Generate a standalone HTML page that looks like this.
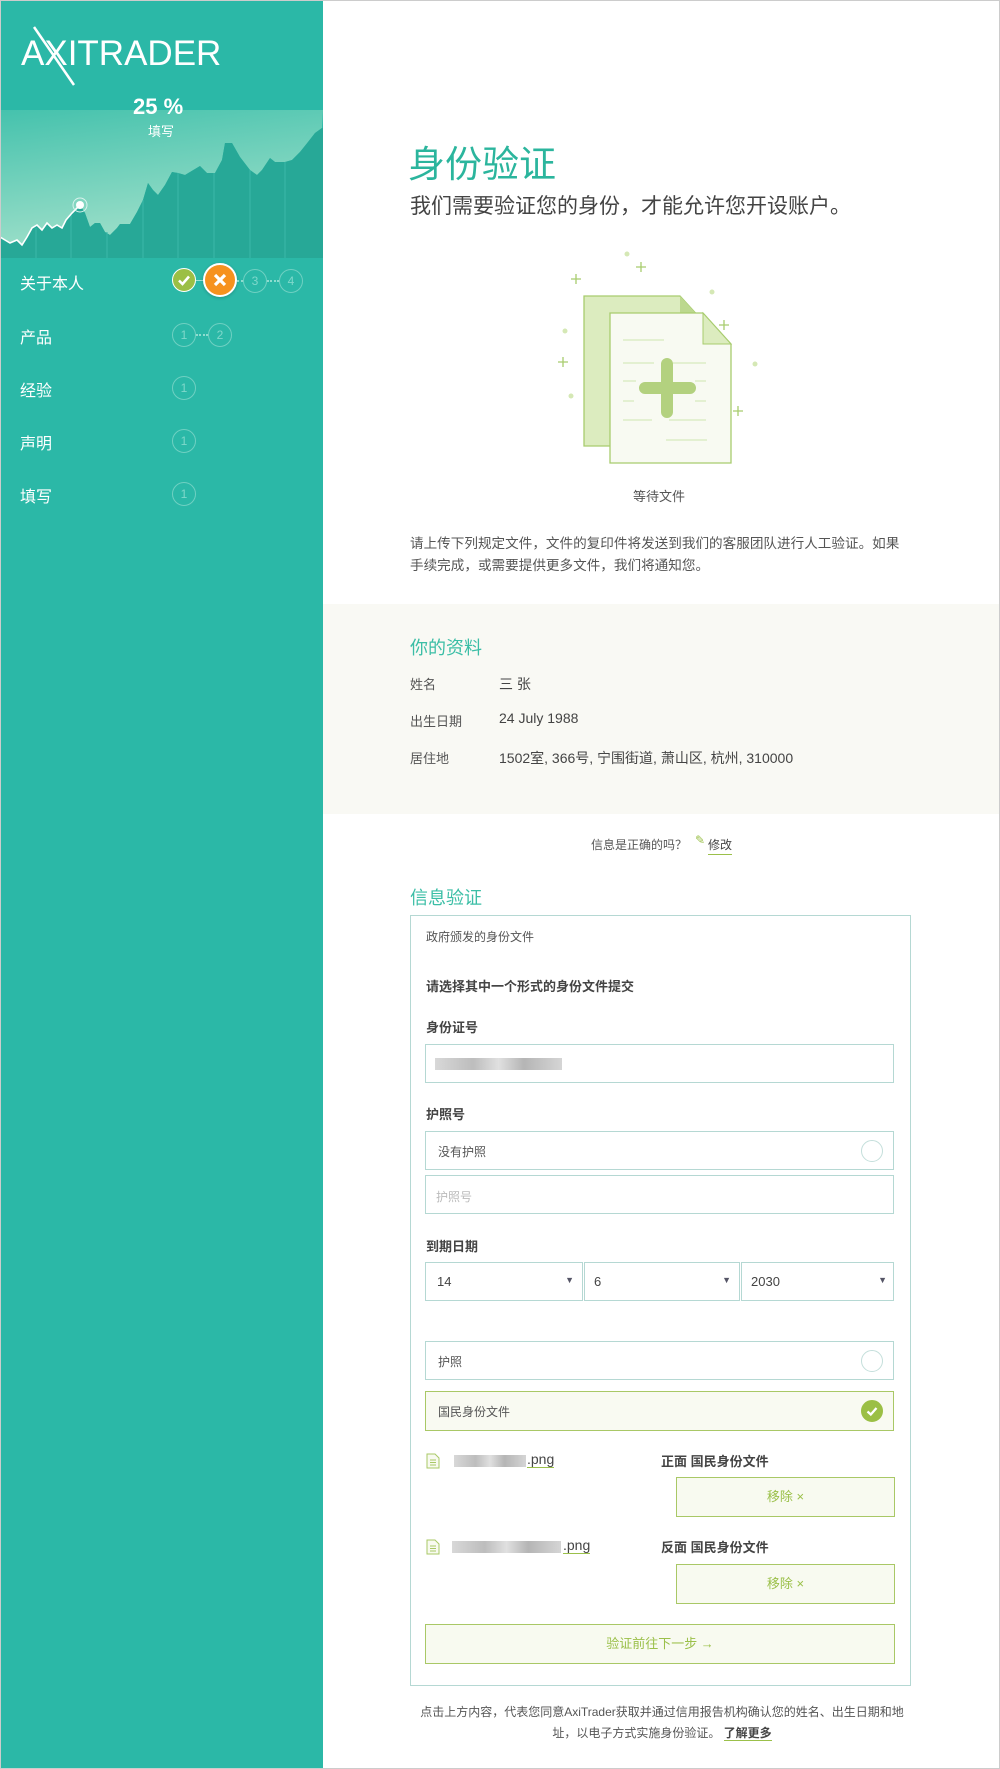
<!DOCTYPE html>
<html><head><meta charset="utf-8">
<style>
*{box-sizing:border-box;margin:0;padding:0}
body{width:1000px;height:1769px;font-family:"Liberation Sans","Noto Sans CJK SC",sans-serif;color:#444;background:#fff;position:relative;overflow:hidden}
.frame{position:absolute;left:0;top:0;width:1000px;height:1769px;border:1px solid #ccc;z-index:5;pointer-events:none}
.side{position:absolute;left:0;top:0;width:323px;height:1769px;background:#2bb8a7}
.abs{position:absolute}
.menu{position:absolute;left:20px;color:#fff;font-size:16px}
.c{position:absolute;width:24px;height:24px;border:1px solid #6fd0c2;border-radius:50%;color:#7fd8cb;font-size:12px;text-align:center;line-height:22px}
.dots{position:absolute;height:0;border-top:2px dotted #8ddccf}
.t{position:absolute;white-space:nowrap}
.inp{position:absolute;left:425px;width:469px;border:1px solid #b5d8d3;background:#fff}
.lbl{position:absolute;left:426px;font-size:13px;font-weight:bold;color:#444}
.radio{position:absolute;right:10px;top:50%;margin-top:-11px;width:22px;height:22px;border:1px solid #c4dfdb;border-radius:50%}
.btn{position:absolute;border:1px solid #a9c866;background:#f8faf0;color:#9bc04a;font-size:13px;text-align:center}
.blur{position:absolute;height:12px;background:linear-gradient(90deg,#d8d8d8,#bdbdbd 30%,#e0e0e0 50%,#b5b5b5 70%,#d5d5d5)}
</style></head><body>
<div class="side">
  <svg class="abs" style="left:0;top:0" width="323" height="260">
    <defs>
      <linearGradient id="g1" x1="0" y1="0" x2="0.3" y2="1">
        <stop offset="0" stop-color="#45c2ad"/><stop offset="1" stop-color="#9ddfc9"/>
      </linearGradient>
    </defs>
    <rect x="0" y="110" width="323" height="150" fill="#2bb8a7"/>
    <polygon fill="url(#g1)" points="0,110 323,110 322,128 315,133 308,142 300,152 292,160 285,162 275,162 270,158 262,170 257,175 250,170 240,157 232,143 225,143 222,160 215,173 207,173 200,166 190,172 185,175 178,173 172,172 165,185 158,195 153,190 148,183 143,200 137,212 130,224 120,224 117,228 110,235 105,232 100,223 95,223 90,227 85,213 80,205 72,213 66,220 62,228 57,225 52,228 47,223 42,230 37,225 32,228 27,237 22,245 17,240 10,243 0,237"/>
    <polygon fill="#27a897" points="0,237 10,243 17,240 22,245 27,237 32,228 37,225 42,230 47,223 52,228 57,225 62,228 66,220 72,213 80,205 85,213 90,227 95,223 100,223 105,232 110,235 117,228 120,224 130,224 137,212 143,200 148,183 153,190 158,195 165,185 172,172 178,173 185,175 190,172 200,166 207,173 215,173 222,160 225,143 232,143 240,157 250,170 257,175 262,170 270,158 275,162 285,162 292,160 300,152 308,142 315,133 322,128 323,128 323,258 0,258"/>
    <g stroke="#3bb9a8" stroke-width="1">
      <line x1="36" y1="228" x2="36" y2="258"/><line x1="71" y1="215" x2="71" y2="258"/><line x1="107" y1="232" x2="107" y2="258"/><line x1="143" y1="200" x2="143" y2="258"/><line x1="178" y1="173" x2="178" y2="258"/><line x1="214" y1="173" x2="214" y2="258"/><line x1="250" y1="170" x2="250" y2="258"/><line x1="285" y1="162" x2="285" y2="258"/>
    </g>
    <polyline fill="none" stroke="#fff" stroke-width="1.6" points="0,237 10,243 17,240 22,245 27,237 32,228 37,225 42,230 47,223 52,228 57,225 62,228 66,220 72,213 80,205"/>
    <circle cx="80" cy="205" r="7" fill="none" stroke="#d8f2ec" stroke-width="1"/>
    <circle cx="80" cy="205" r="4" fill="#fff"/>
  </svg>
  <div class="t" style="left:21px;top:34px;color:#fff;font-size:35px">AXITRADER</div>
  <svg class="abs" style="left:30px;top:25px" width="50" height="62"><line x1="4" y1="2" x2="44" y2="60" stroke="#fff" stroke-width="2.5"/></svg>
  <div class="t" style="left:133px;top:94px;color:#fff;font-size:22px;font-weight:bold">25 %</div>
  <div class="t" style="left:148px;top:121px;color:#fff;font-size:13px">填写</div>

  <div class="menu" style="top:270px">关于本人</div>
  <div class="abs" style="left:172px;top:268px;width:24px;height:24px;border-radius:50%;background:#9bbf45;border:1px solid #fff"><svg width="22" height="22"><path d="M6 11.5 L9.5 15 L16 7.5" stroke="#fff" stroke-width="2.5" fill="none"/></svg></div>
  <div class="dots" style="left:196px;top:280px;width:10px;border-top:1px solid #9de0d4"></div>
  <div class="abs" style="left:203px;top:263px;width:34px;height:34px;border-radius:50%;background:#f6921e;border:2px solid #fff;box-shadow:0 1px 3px rgba(0,0,0,.2)"><svg width="30" height="30"><path d="M10 10 L20 20 M20 10 L10 20" stroke="#fff" stroke-width="3.2"/></svg></div>
  <div class="dots" style="left:237px;top:280px;width:6px"></div>
  <div class="c" style="left:243px;top:269px">3</div>
  <div class="dots" style="left:267px;top:280px;width:12px"></div>
  <div class="c" style="left:279px;top:269px">4</div>

  <div class="menu" style="top:324px">产品</div>
  <div class="c" style="left:172px;top:323px">1</div>
  <div class="dots" style="left:196px;top:334px;width:12px"></div>
  <div class="c" style="left:208px;top:323px">2</div>
  <div class="menu" style="top:377px">经验</div>
  <div class="c" style="left:172px;top:376px">1</div>
  <div class="menu" style="top:430px">声明</div>
  <div class="c" style="left:172px;top:429px">1</div>
  <div class="menu" style="top:483px">填写</div>
  <div class="c" style="left:172px;top:482px">1</div>
</div>

<div class="t" style="left:408px;top:134px;font-size:37px;color:#2bb59d">身份验证</div>
<div class="t" style="left:410px;top:190px;font-size:21px;color:#444">我们需要验证您的身份，才能允许您开设账户。</div>

<svg class="abs" style="left:550px;top:250px" width="220" height="230">
  <g fill="#d5e8b5">
    <circle cx="77" cy="4" r="2.5"/><circle cx="162" cy="42" r="2.5"/><circle cx="15" cy="81" r="2.5"/><circle cx="21" cy="146" r="2.5"/><circle cx="165" cy="115" r="2.5"/><circle cx="205" cy="114" r="2.5"/>
  </g>
  <g stroke="#a8cc6e" stroke-width="1.3">
    <path d="M26 24v10M21 29h10"/><path d="M91 12v10M86 17h10"/><path d="M174 70v10M169 75h10"/><path d="M13 107v10M8 112h10"/><path d="M188 156v10M183 161h10"/>
  </g>
  <path d="M34 46 H130 L161 80 V196 H34 Z" fill="#dcecbf" stroke="#a8cc6e" stroke-width="1.3"/>
  <path d="M130 46 V80 H161 Z" fill="#bcd88e"/>
  <path d="M60 63 H153 L181 94 V213 H60 Z" fill="#f8faf2" stroke="#a8cc6e" stroke-width="1.3"/>
  <path d="M153 63 V94 H181 Z" fill="#dcecbf" stroke="#a8cc6e" stroke-width="1"/>
  <g stroke="#dcecc6" stroke-width="1.5">
    <path d="M73 90h41M73 113h31M123 113h33M73 131h13M145 131h11M73 151h11M145 151h11M73 170h29M119 170h37M116 190h41"/>
  </g>
  <path d="M117 114 V162 M95 138 H140" stroke="#b3d17f" stroke-width="12" stroke-linecap="round"/>
</svg>
<div class="t" style="left:633px;top:486px;font-size:13px;color:#555">等待文件</div>
<div class="t" style="left:410px;top:533px;font-size:13.6px;color:#555;line-height:22px;white-space:normal;width:500px">请上传下列规定文件，文件的复印件将发送到我们的客服团队进行人工验证。如果<br>手续完成，或需要提供更多文件，我们将通知您。</div>

<div class="abs" style="left:323px;top:604px;width:677px;height:210px;background:#f9f9f4"></div>
<div class="t" style="left:410px;top:634px;font-size:18px;color:#3bbea6">你的资料</div>
<div class="t" style="left:410px;top:674px;font-size:13px;color:#555">姓名</div>
<div class="t" style="left:499px;top:674px;font-size:14px;color:#444">三 张</div>
<div class="t" style="left:410px;top:711px;font-size:13px;color:#555">出生日期</div>
<div class="t" style="left:499px;top:710px;font-size:14px;color:#444">24 July 1988</div>
<div class="t" style="left:410px;top:748px;font-size:13px;color:#555">居住地</div>
<div class="t" style="left:499px;top:748px;font-size:14px;color:#444">1502室, 366号, 宁围街道, 萧山区, 杭州, 310000</div>

<div class="t" style="left:591px;top:836px;font-size:12px;color:#555">信息是正确的吗？</div>
<div class="t" style="left:695px;top:833px;font-size:12px;color:#9bc04a">✎</div>
<div class="t" style="left:708px;top:836px;font-size:12px;color:#444;border-bottom:1px solid #9bc04a;padding-bottom:1px">修改</div>

<div class="t" style="left:410px;top:884px;font-size:18px;color:#3bbea6">信息验证</div>
<div class="abs" style="left:410px;top:915px;width:501px;height:771px;border:1px solid #b5d8d3"></div>
<div class="t" style="left:426px;top:928px;font-size:12px;color:#555">政府颁发的身份文件</div>
<div class="lbl" style="top:976px">请选择其中一个形式的身份文件提交</div>
<div class="lbl" style="top:1017px">身份证号</div>
<div class="inp" style="top:1044px;height:39px"><div class="blur" style="left:9px;top:13px;width:127px"></div></div>
<div class="lbl" style="top:1104px">护照号</div>
<div class="inp" style="top:1131px;height:39px"><div class="t" style="left:12px;top:11px;font-size:12px;color:#555">没有护照</div><div class="radio"></div></div>
<div class="inp" style="top:1175px;height:39px"><div class="t" style="left:10px;top:12px;font-size:12px;color:#bbb">护照号</div></div>
<div class="lbl" style="top:1236px">到期日期</div>
<div class="inp" style="top:1262px;height:39px;width:158px"><div class="t" style="left:11px;top:11px;font-size:13px">14</div><div class="t" style="right:8px;top:12px;font-size:9px;color:#556">▼</div></div>
<div class="inp" style="left:584px;top:1262px;height:39px;width:156px"><div class="t" style="left:9px;top:11px;font-size:13px">6</div><div class="t" style="right:8px;top:12px;font-size:9px;color:#556">▼</div></div>
<div class="inp" style="left:741px;top:1262px;height:39px;width:153px"><div class="t" style="left:9px;top:11px;font-size:13px">2030</div><div class="t" style="right:6px;top:12px;font-size:9px;color:#556">▼</div></div>
<div class="inp" style="top:1341px;height:39px"><div class="t" style="left:12px;top:11px;font-size:12px;color:#555">护照</div><div class="radio"></div></div>
<div class="inp" style="top:1391px;height:40px;background:#f9faf2;border-color:#a9c866"><div class="t" style="left:12px;top:11px;font-size:12px;color:#555">国民身份文件</div><div class="radio" style="background:#9bbf45;border-color:#9bbf45"><svg width="20" height="20"><path d="M5.5 10.5 L8.8 13.5 L14.5 7" stroke="#fff" stroke-width="2.3" fill="none"/></svg></div></div>

<svg class="abs" style="left:426px;top:1453px" width="14" height="16"><path d="M1 1H9L13 5V15H1Z" fill="#f8faf0" stroke="#a9c866"/><path d="M4 7h6M4 9.5h6M4 12h6" stroke="#a9c866"/></svg>
<div class="blur" style="left:454px;top:1455px;width:72px"></div>
<div class="t" style="left:527px;top:1451px;font-size:14px;color:#444;border-bottom:1px solid #9bc04a">.png</div>
<div class="t" style="left:661px;top:1451px;font-size:13px;font-weight:bold;color:#444">正面 国民身份文件</div>
<div class="btn" style="left:676px;top:1477px;width:219px;height:40px;line-height:38px">移除 ×</div>

<svg class="abs" style="left:426px;top:1539px" width="14" height="16"><path d="M1 1H9L13 5V15H1Z" fill="#f8faf0" stroke="#a9c866"/><path d="M4 7h6M4 9.5h6M4 12h6" stroke="#a9c866"/></svg>
<div class="blur" style="left:452px;top:1541px;width:109px"></div>
<div class="t" style="left:563px;top:1537px;font-size:14px;color:#444;border-bottom:1px solid #9bc04a">.png</div>
<div class="t" style="left:661px;top:1537px;font-size:13px;font-weight:bold;color:#444">反面 国民身份文件</div>
<div class="btn" style="left:676px;top:1564px;width:219px;height:40px;line-height:38px">移除 ×</div>

<div class="btn" style="left:425px;top:1624px;width:470px;height:40px;line-height:38px">验证前往下一步 →</div>

<div class="t" style="left:412px;top:1702px;font-size:12px;color:#555;line-height:21px;white-space:normal;width:500px;text-align:center">点击上方内容，代表您同意AxiTrader获取并通过信用报告机构确认您的姓名、出生日期和地址，以电子方式实施身份验证。 <b style="color:#444;border-bottom:1px solid #9bc04a">了解更多</b></div>

<div class="frame"></div>
</body></html>
